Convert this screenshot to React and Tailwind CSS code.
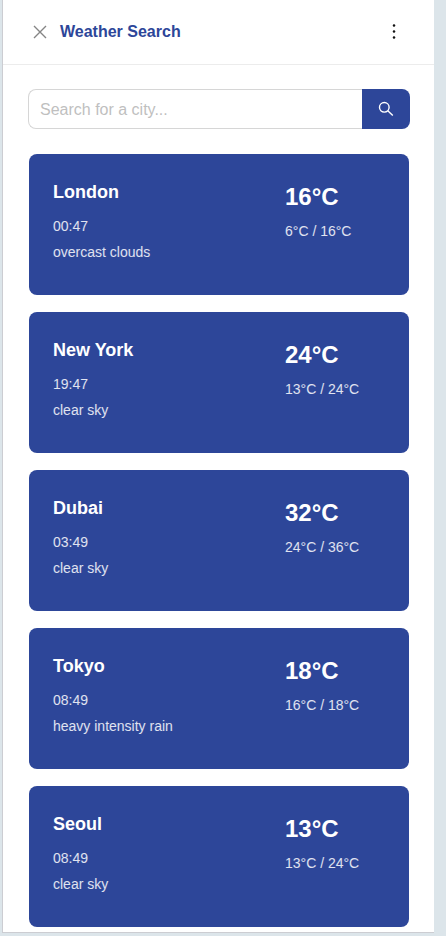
const cities = [
  { name: "London", time: "00:47", sky: "overcast clouds", temp: "16°C", range: "6°C / 16°C" },
  { name: "New York", time: "19:47", sky: "clear sky", temp: "24°C", range: "13°C / 24°C" },
  { name: "Dubai", time: "03:49", sky: "clear sky", temp: "32°C", range: "24°C / 36°C" },
  { name: "Tokyo", time: "08:49", sky: "heavy intensity rain", temp: "18°C", range: "16°C / 18°C" },
  { name: "Seoul", time: "08:49", sky: "clear sky", temp: "13°C", range: "13°C / 24°C" },
];

function CityCard({ city }) {
  return (
    <li className="flex min-h-[141px] justify-between rounded-lg bg-[#2d4699] p-6 text-white">
      <div>
        <h2 className="text-lg leading-7 font-bold">{city.name}</h2>
        <div className="mt-2 flex flex-col gap-0.5 text-sm leading-6 text-white/85">
          <p>{city.time}</p>
          <p>{city.sky}</p>
        </div>
      </div>
      <div className="w-25">
        <p className="text-2xl leading-[37px] font-bold">{city.temp}</p>
        <p className="mt-1 text-sm leading-6 text-white/85">{city.range}</p>
      </div>
    </li>
  );
}

function Header() {
  return (
    <header className="flex h-[65px] items-center border-b border-[#ececec] pr-8 pl-[29px]">
      <button type="button" aria-label="Close" className="mr-3 p-px">
        <svg className="size-[14px]" viewBox="0 0 14 14" fill="none" stroke="#858585" strokeWidth="1.4">
          <path d="M1 1l12 12M13 1L1 13" />
        </svg>
      </button>
      <h1 className="flex-1 text-base leading-[26px] font-bold text-[#2d4699]">Weather Search</h1>
      <button type="button" aria-label="More options" className="px-1">
        <svg className="h-4 w-[8px]" viewBox="0 0 8 16" fill="#111111">
          <circle cx="4" cy="1.4" r="1.25" />
          <circle cx="4" cy="7.5" r="1.25" />
          <circle cx="4" cy="13.6" r="1.25" />
        </svg>
      </button>
    </header>
  );
}

export default function App() {
  return (
    <div className="min-h-screen bg-[#dce5ea] pr-3 pb-[3px] pl-0.5 font-['Liberation_Sans',Arial,sans-serif]">
      <div className="border-b border-l border-[#cccdd2] bg-white pb-[5px]">
        <Header />
        <main className="pt-6 pr-6 pl-[25px]">
          <form role="search" className="flex h-10" onSubmit={(e) => e.preventDefault()}>
            <input
              type="text"
              aria-label="Search for a city"
              placeholder="Search for a city..."
              className="min-w-0 flex-1 rounded-l-lg border border-r-0 border-[#d6d6d6] px-[11px] pt-0.5 text-base text-[#333333] outline-none placeholder:text-[#bfbfbf]"
            />
            <button
              type="submit"
              aria-label="Search"
              className="flex w-12 items-center justify-center rounded-r-lg bg-[#2d4699]"
            >
              <svg className="size-4" viewBox="0 0 16 16" fill="none" stroke="white" strokeWidth="1.4">
                <circle cx="6.3" cy="6.3" r="4.8" />
                <path d="M9.8 9.8l5 4.8" />
              </svg>
            </button>
          </form>
          <ul className="mt-[25px] flex flex-col gap-[17px] px-px">
            {cities.map((city) => (
              <CityCard key={city.name} city={city} />
            ))}
          </ul>
        </main>
      </div>
    </div>
  );
}
